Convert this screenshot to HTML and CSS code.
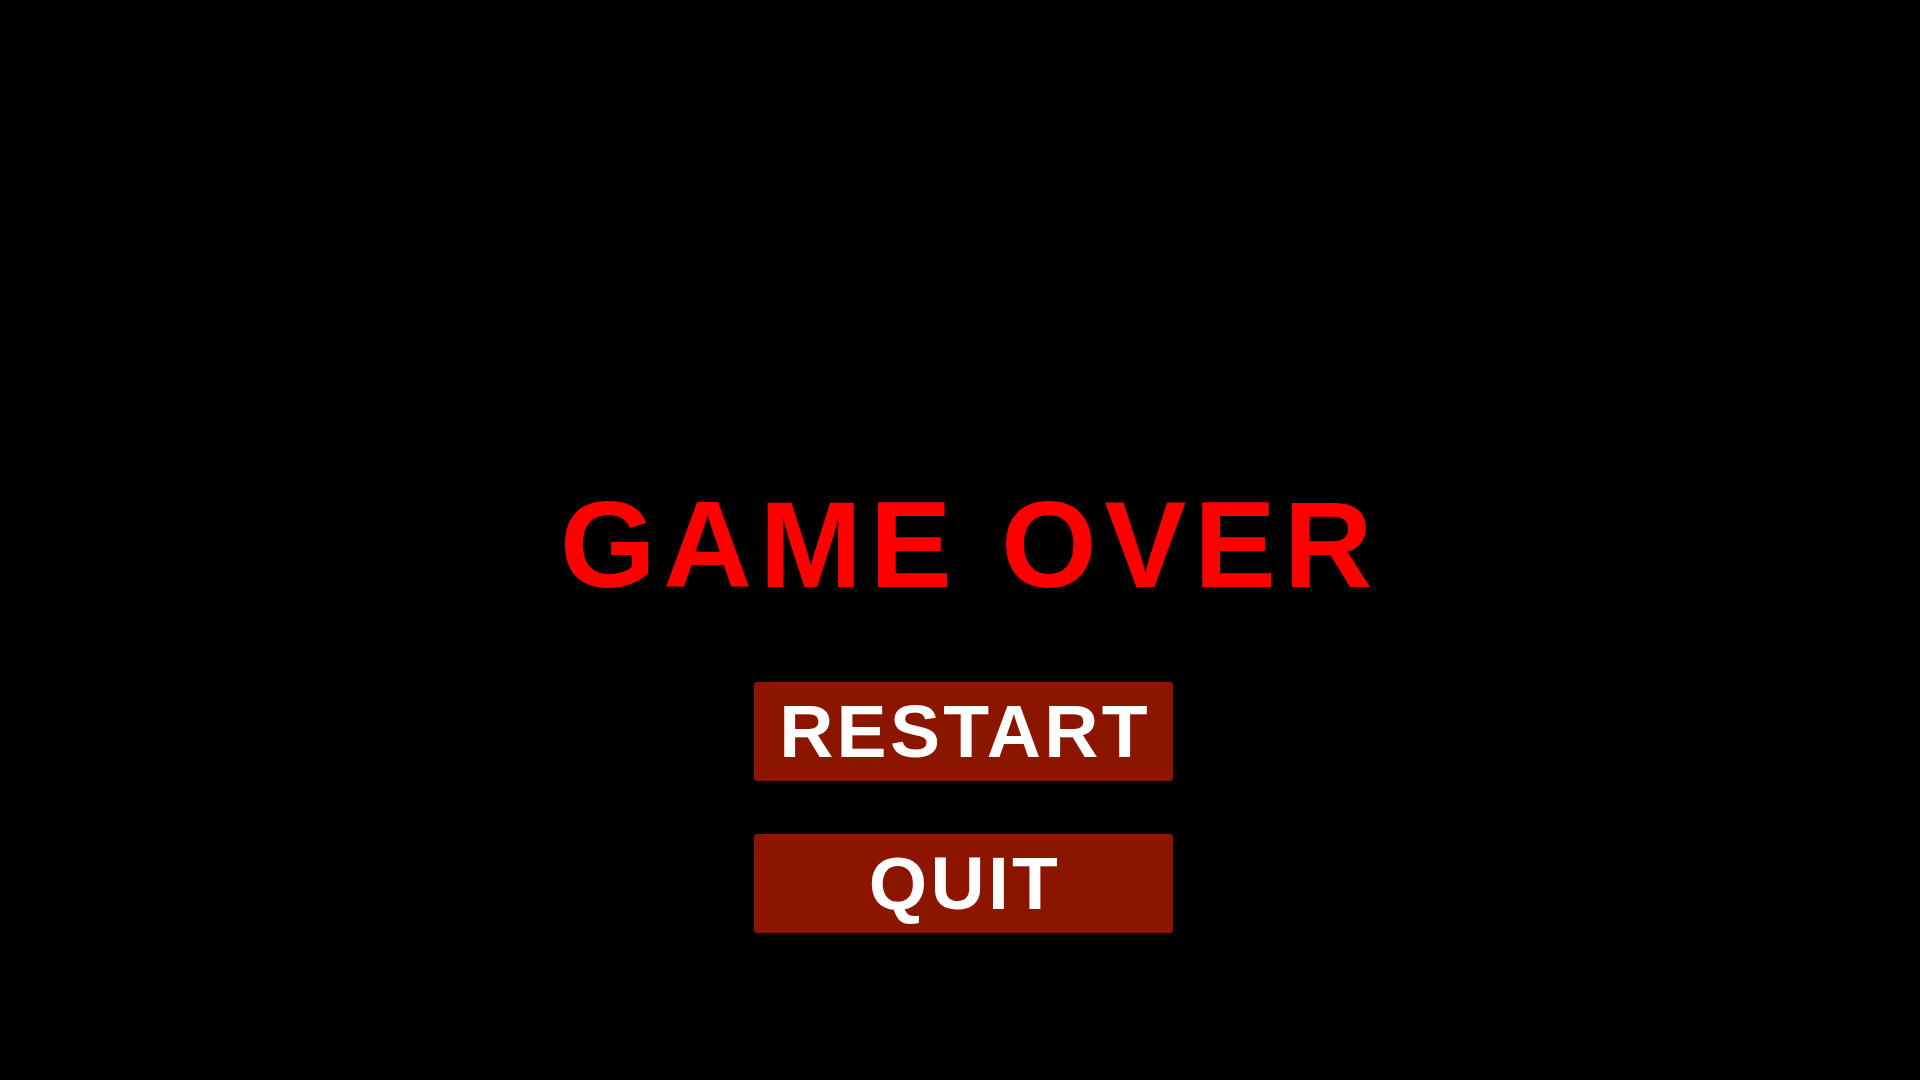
FILE: index.html
```html
<!DOCTYPE html>
<html lang="en">
<head>
    <meta charset="UTF-8">
    <meta name="viewport" content="width=device-width, initial-scale=1.0">
    <title>Game Over</title>
    <link rel="stylesheet" href="styles.css">
</head>
<body>

    <!-- End screen -->
    <main class="game-over">
        <h1 class="title">GAME OVER</h1>
        <div class="menu">
            <button class="menu-btn">RESTART</button>
            <button class="menu-btn">QUIT</button>
        </div>
    </main>

</body>
</html>
```

FILE: styles.css
```css
* {
    margin: 0;
    padding: 0;
    box-sizing: border-box;
}

body {
    background-color: #000;
    font-family: 'Liberation Sans', Arial, sans-serif;
    height: 100vh;
    overflow: hidden;
}

.game-over {
    display: flex;
    flex-direction: column;
    align-items: center;
    padding-top: 483px;
    padding-left: 7px;
}

.title {
    color: #ff0000;
    font-size: 123px;
    font-weight: bold;
    line-height: 1;
    letter-spacing: 7.6px;
    margin-right: -13px;
}

.menu {
    display: flex;
    flex-direction: column;
    gap: 53px;
    margin-top: 76px;
}

.menu-btn {
    width: 419px;
    height: 99px;
    display: flex;
    align-items: center;
    justify-content: center;
    background-color: #8c1500;
    color: #fff;
    border: none;
    border-radius: 3px;
    font-family: inherit;
    font-size: 75px;
    font-weight: bold;
    line-height: 1;
    letter-spacing: 3.3px;
    padding-left: 3px;
    cursor: pointer;
}
```
